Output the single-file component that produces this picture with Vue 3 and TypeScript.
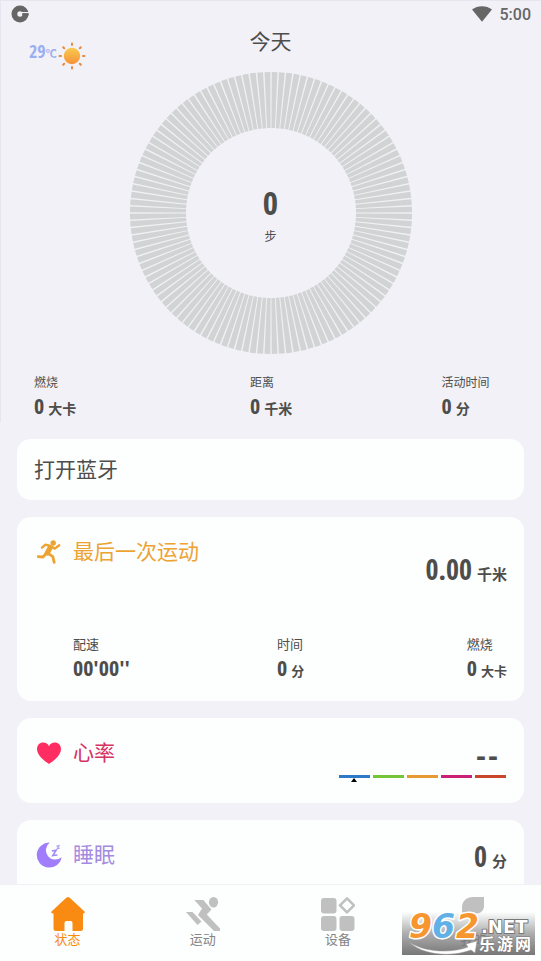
<script setup lang="ts">
interface Metric {
  label: string
  value: string
  unit?: string
}

interface Tab {
  id: string
  label: string
}

const today: Metric[] = [
  { label: '燃烧', value: '0', unit: '大卡' },
  { label: '距离', value: '0', unit: '千米' },
  { label: '活动时间', value: '0', unit: '分' },
]

const workout: Metric[] = [
  { label: '配速', value: "00'00''" },
  { label: '时间', value: '0', unit: '分' },
  { label: '燃烧', value: '0', unit: '大卡' },
]

const zones: string[] = ['rest', 'light', 'cardio', 'hard', 'peak']

const tabs: Tab[] = [
  { id: 'status', label: '状态' },
  { id: 'sport', label: '运动' },
  { id: 'device', label: '设备' },
  { id: 'mine', label: '我的' },
]

const activeTab = 'status'
</script>

<template>
  <div class="app">
    <main class="content">
      <div class="hero">
        <header class="system">
          <svg class="app-mark" viewBox="0 0 18 18" aria-hidden="true">
            <circle cx="9" cy="9" r="5.600" fill="none" stroke="#666" stroke-width="5.800" />
            <path d="M9.500 7.600H18" stroke="#f2f1f7" stroke-width="1.200" />
            <path d="M11.200 8.300H17.600V10.600H11.200z" fill="#666" />
          </svg>
          <div class="clock">
            <svg class="wifi" viewBox="0 0 20 16" aria-hidden="true">
              <path d="M0 3.600C5.500-1 14.500-1 20 3.600L10 15.800z" fill="#666" />
            </svg>
            <span>5:00</span>
          </div>
        </header>

        <div class="heading">
          <div class="weather">
            <span class="temp">29<small>℃</small></span>
            <svg class="sun" viewBox="0 0 28 28" aria-hidden="true">
              <defs>
                <linearGradient id="sun-fill" x1="0" y1="0" x2="0" y2="1">
                  <stop offset="0" stop-color="#f9cb50" />
                  <stop offset="1" stop-color="#f59138" />
                </linearGradient>
              </defs>
              <circle cx="14" cy="14" r="8.200" fill="url(#sun-fill)" />
              <g stroke="#e58a42" stroke-width="2" stroke-linecap="round">
                <path d="M14 1.500v1.500M14 25v1.500M1.500 14h1.500M25 14h1.500M5.200 5.200l1 1M21.800 21.800l1 1M5.200 22.800l1-1M21.800 6.200l1-1" />
              </g>
            </svg>
          </div>
          <h1>今天</h1>
        </div>

        <section class="ring">
          <svg viewBox="0 0 282 282" aria-hidden="true">
            <circle cx="141" cy="141" r="113" fill="none" stroke="#f0f1f4" stroke-width="56" />
            <circle
              cx="141" cy="141" r="113" fill="none" stroke="#d1d3d4" stroke-width="56"
              pathLength="120" stroke-dasharray="0.8 0.2" stroke-dashoffset="-0.1"
            />
          </svg>
          <div class="steps">
            <strong class="num">0</strong>
            <span>步</span>
          </div>
        </section>

        <dl class="today">
          <div v-for="m in today" :key="m.label">
            <dt>{{ m.label }}</dt>
            <dd><span class="num">{{ m.value }}</span><b>{{ m.unit }}</b></dd>
          </div>
        </dl>
      </div>

      <div class="cards">
        <button type="button" class="card bluetooth">打开蓝牙</button>

        <section class="card workout">
          <div class="title">
            <svg viewBox="0 0 26 26" aria-hidden="true">
              <circle cx="17.200" cy="4" r="2.700" fill="#eca332" />
              <g fill="none" stroke="#eca332" stroke-linecap="round" stroke-linejoin="round">
                <path d="M6 8.600L9.500 5.600L14.500 7L18.800 9.600L23.200 6.200" stroke-width="2.400" />
                <path d="M14 9L11.300 14" stroke-width="5.200" />
                <path d="M10.200 14.500L7 18L2.200 17.600" stroke-width="2.800" />
                <path d="M12 14.400L16.800 17.600L18.200 23.400" stroke-width="2.800" />
              </g>
            </svg>
            <h2>最后一次运动</h2>
          </div>
          <p class="reading"><span class="num">0.00</span><b>千米</b></p>
          <dl class="splits">
            <div v-for="m in workout" :key="m.label">
              <dt>{{ m.label }}</dt>
              <dd><span class="num">{{ m.value }}</span><b v-if="m.unit">{{ m.unit }}</b></dd>
            </div>
          </dl>
        </section>

        <section class="card heart">
          <div class="title">
            <svg viewBox="0 0 26 26" aria-hidden="true">
              <path d="M13 24C9 21.200 1 15.500 1 9.200C1 5.200 3.700 2.600 7.200 2.600C9.800 2.600 12 4 13 6.200C14 4 16.200 2.600 18.800 2.600C22.300 2.600 25 5.200 25 9.200C25 15.500 17 21.200 13 24z" fill="#ff2d62" />
            </svg>
            <h2>心率</h2>
          </div>
          <div class="rate">
            <p class="empty"><span>-</span><span>-</span></p>
            <div class="zones">
              <i v-for="z in zones" :key="z" :class="z"></i>
            </div>
          </div>
        </section>

        <section class="card sleep">
          <div class="title">
            <svg viewBox="0 0 26 26" aria-hidden="true">
              <path d="M13.800 .6A12.500 12.500 0 1 0 25.600 15.200A9.400 9.400 0 1 1 13.800 .6z" fill="#9f7dfb" />
              <path d="M15.800 9L20.200 8.200L16.800 13.600L21.400 13" fill="none" stroke="#a68cf0" stroke-width="1.600" />
              <path d="M20.400 4.200L23 3.600L21.200 6.600L23.800 6.200" fill="none" stroke="#b7a3f3" stroke-width="1.200" />
            </svg>
            <h2>睡眠</h2>
          </div>
          <p class="reading"><span class="num">0</span><b>分</b></p>
        </section>
      </div>
    </main>

    <nav class="tabs">
      <a v-for="t in tabs" :key="t.id" :href="'#' + t.id" :class="{ active: t.id === activeTab }">
        <svg viewBox="0 0 34 34" aria-hidden="true">
          <path
            v-if="t.id === 'status'"
            d="M15.300 .7Q17-.6 18.700 .7L33.500 14.500Q34.500 16.500 32 16.500V31.500Q32 34 29.500 34H21.500V26Q21.500 24 19.500 24H15.500Q13.500 24 13.500 26V34H5Q2.500 34 2.500 31.500V16.500Q-.5 16.500 .5 14.500z"
          />
          <template v-else-if="t.id === 'sport'">
            <ellipse cx="27.500" cy="5.300" rx="4.600" ry="5.300" />
            <path d="M8.300 3H17.300L25.500 12.500L20.800 17.500L34 31.500V34H28L12 18L16 11.500z" />
            <path d="M0 15H6.500L15.500 24.500L11.500 28z" />
          </template>
          <template v-else-if="t.id === 'device'">
            <rect x="0" y="1" width="15.500" height="15.500" rx="3" />
            <rect x="0" y="19" width="15.500" height="15" rx="3" />
            <rect x="18.500" y="19" width="15" height="15" rx="3" />
            <path d="M26 1.400L33 8.400L26 15.400L19 8.400z" fill="none" stroke="currentColor" stroke-width="2.600" stroke-linejoin="round" />
          </template>
          <path v-else d="M6 16.500V10C6 4 11 0 17 0H28V9C28 13 25 16.500 20 16.500z" />
        </svg>
        <span>{{ t.label }}</span>
      </a>
      <svg class="stamp" viewBox="0 0 133 43" role="img" aria-label="962.NET 乐游网">
        <defs>
          <linearGradient id="stamp-fill" x1="0" y1="0" x2="0" y2="1">
            <stop offset="0" stop-color="#777" stop-opacity="0" />
            <stop offset="0.500" stop-color="#777" stop-opacity="0.600" />
            <stop offset="1" stop-color="#777" />
          </linearGradient>
        </defs>
        <rect width="133" height="43" fill="url(#stamp-fill)" />
        <path d="M7 30C24 41 50 41 66 35L64 32L75 29L73 41L69 38C50 45 22 44 7 30z" fill="#fff" stroke="#999" stroke-width=".5" />
        <g class="digits">
          <text x="7" y="26" fill="#f7962e">9</text>
          <text x="30" y="26" fill="#62b1e6">6</text>
          <text x="54" y="26" fill="#f7962e">2</text>
        </g>
        <text class="net" x="79" y="21">.NET</text>
        <g class="cjk">
          <text x="77" y="38">乐</text>
          <text x="95" y="38">游</text>
          <text x="113" y="38">网</text>
        </g>
      </svg>
    </nav>
  </div>
</template>

<style>
body {
  margin: 0;
  background: #fff;
}
</style>

<style scoped>
.app {
  display: flex;
  flex-direction: column;
  height: 100vh;
  box-sizing: border-box;
  font-family: Roboto, "Noto Sans CJK SC", sans-serif;
  color: #4d4d4b;
}
.content {
  flex: 1;
  min-height: 0;
  overflow: hidden;
  background: #f2f1f7;
}
.hero {
  padding-right: 1px;
  border-top: 1px solid #e6e5f0;
  border-left: 1px solid #e6e5f0;
}
h1, h2, p, dl, dd {
  margin: 0;
  font-weight: 400;
}
.num,
.temp {
  font-family: "Open Sans Condensed", "Roboto Condensed", "Noto Sans CJK SC", sans-serif;
  font-weight: 700;
}
.system {
  display: flex;
  justify-content: space-between;
  align-items: center;
  height: 26px;
  padding: 0 9px 0 10px;
}
.app-mark {
  width: 18px;
  height: 18px;
}
.clock {
  display: flex;
  align-items: center;
  gap: 8px;
  font-size: 16px;
  font-weight: 500;
  color: #666;
}
.wifi {
  width: 20px;
  height: 16px;
}
.heading {
  display: grid;
  grid-template-columns: 1fr auto 1fr;
  padding: 0 28px;
  height: 45px;
}
.weather {
  display: flex;
  align-items: center;
  gap: 1px;
  height: 58px;
}
.temp {
  font-size: 18px;
  line-height: 24px;
  padding-bottom: 8px;
  color: #9aaef2;
}
.temp small {
  font-size: 11px;
}
.sun {
  width: 28px;
  height: 28px;
}
h1 {
  font-size: 21px;
  line-height: 30px;
}
.ring {
  display: grid;
  justify-content: center;
  align-items: center;
}
.ring > * {
  grid-area: 1 / 1;
}
.ring svg {
  display: block;
  width: 282px;
  height: 282px;
}
.steps {
  display: flex;
  flex-direction: column;
  align-items: center;
  font-size: 12px;
  line-height: 20px;
}
.steps .num {
  font-size: 33px;
  line-height: 48px;
}
.today {
  display: grid;
  grid-template-columns: 44% 39% 17%;
  padding: 19px 15px 0 33px;
}
dt {
  font-size: 12px;
  line-height: 20px;
}
dd {
  display: flex;
  align-items: baseline;
  gap: 4px;
  font-size: 14px;
  line-height: 25px;
  white-space: nowrap;
}
dd .num {
  font-size: 22px;
}
.cards {
  display: flex;
  flex-direction: column;
  gap: 17px;
  padding: 17px;
}
.card {
  box-sizing: border-box;
  border: 0;
  border-radius: 14px;
  background: #fdfefe;
  padding: 18px 17px;
}
.bluetooth {
  height: 61px;
  font: inherit;
  font-size: 21px;
  line-height: 26px;
  color: inherit;
  text-align: left;
}
.title {
  display: flex;
  align-items: center;
  gap: 11px;
  height: 34px;
  padding-left: 2px;
}
.title svg {
  width: 26px;
  height: 26px;
}
h2 {
  font-size: 21px;
  line-height: 34px;
}
.reading {
  display: flex;
  justify-content: flex-end;
  align-items: baseline;
  gap: 5px;
  font-size: 15px;
  line-height: 36px;
}
.reading .num {
  font-size: 28px;
}
.workout {
  height: 184px;
}
.workout .reading {
  margin-top: -18px;
}
.workout h2 {
  color: #eca332;
}
.splits {
  display: grid;
  grid-template-columns: 47% 1fr auto;
  padding: 42px 0 0 39px;
}
.splits dt,
.splits dd {
  font-size: 13px;
}
.heart,
.sleep {
  display: flex;
  justify-content: space-between;
  align-items: flex-start;
  height: 85px;
}
.heart h2 {
  color: #d63262;
}
.sleep h2 {
  color: #a48be0;
}
.rate {
  display: flex;
  flex-direction: column;
  align-items: flex-end;
  padding-right: 1px;
}
.empty {
  display: flex;
  gap: 2px;
  padding-right: 8px;
  font-family: "Liberation Sans", sans-serif;
  font-size: 30px;
  font-weight: 700;
  line-height: 39px;
}
.zones {
  display: flex;
  gap: 3px;
}
.zones i {
  position: relative;
  width: 31px;
  height: 3px;
}
.rest { background: #2e78c8; }
.light { background: #76c438; }
.cardio { background: #e69a34; }
.hard { background: #cc1f76; }
.peak { background: #c9462b; }
.rest::after {
  content: "";
  position: absolute;
  left: 12px;
  top: 3px;
  border: 3px solid transparent;
  border-top: 0;
  border-bottom: 4px solid #000;
}
.tabs {
  position: relative;
  display: flex;
  height: 77px;
  border-top: 1px solid #edf2f2;
  background: #fdfefe;
  box-sizing: border-box;
}
.tabs a {
  flex: 1;
  display: flex;
  flex-direction: column;
  align-items: center;
  padding-top: 12px;
  font-size: 13px;
  line-height: 18px;
  color: #858585;
  text-decoration: none;
}
.tabs a svg {
  width: 34px;
  height: 34px;
  fill: currentColor;
  color: #c0c0c0;
}
.tabs a.active,
.tabs a.active svg {
  color: #f98b12;
}
.stamp {
  position: absolute;
  right: 6px;
  bottom: 6px;
  width: 133px;
  height: 43px;
  overflow: visible;
}
.stamp text {
  paint-order: stroke;
  stroke-linejoin: round;
}
.digits text {
  font: italic 700 33px "DejaVu Sans", sans-serif;
  stroke: #fff;
  stroke-width: 3px;
}
.net {
  font: 700 18px "DejaVu Sans", sans-serif;
  fill: #fff;
  stroke: #777;
  stroke-width: 2px;
}
.cjk text {
  font: 700 16px "Noto Sans CJK SC", sans-serif;
  fill: #fff;
  stroke: #777;
  stroke-width: 1px;
}
</style>
